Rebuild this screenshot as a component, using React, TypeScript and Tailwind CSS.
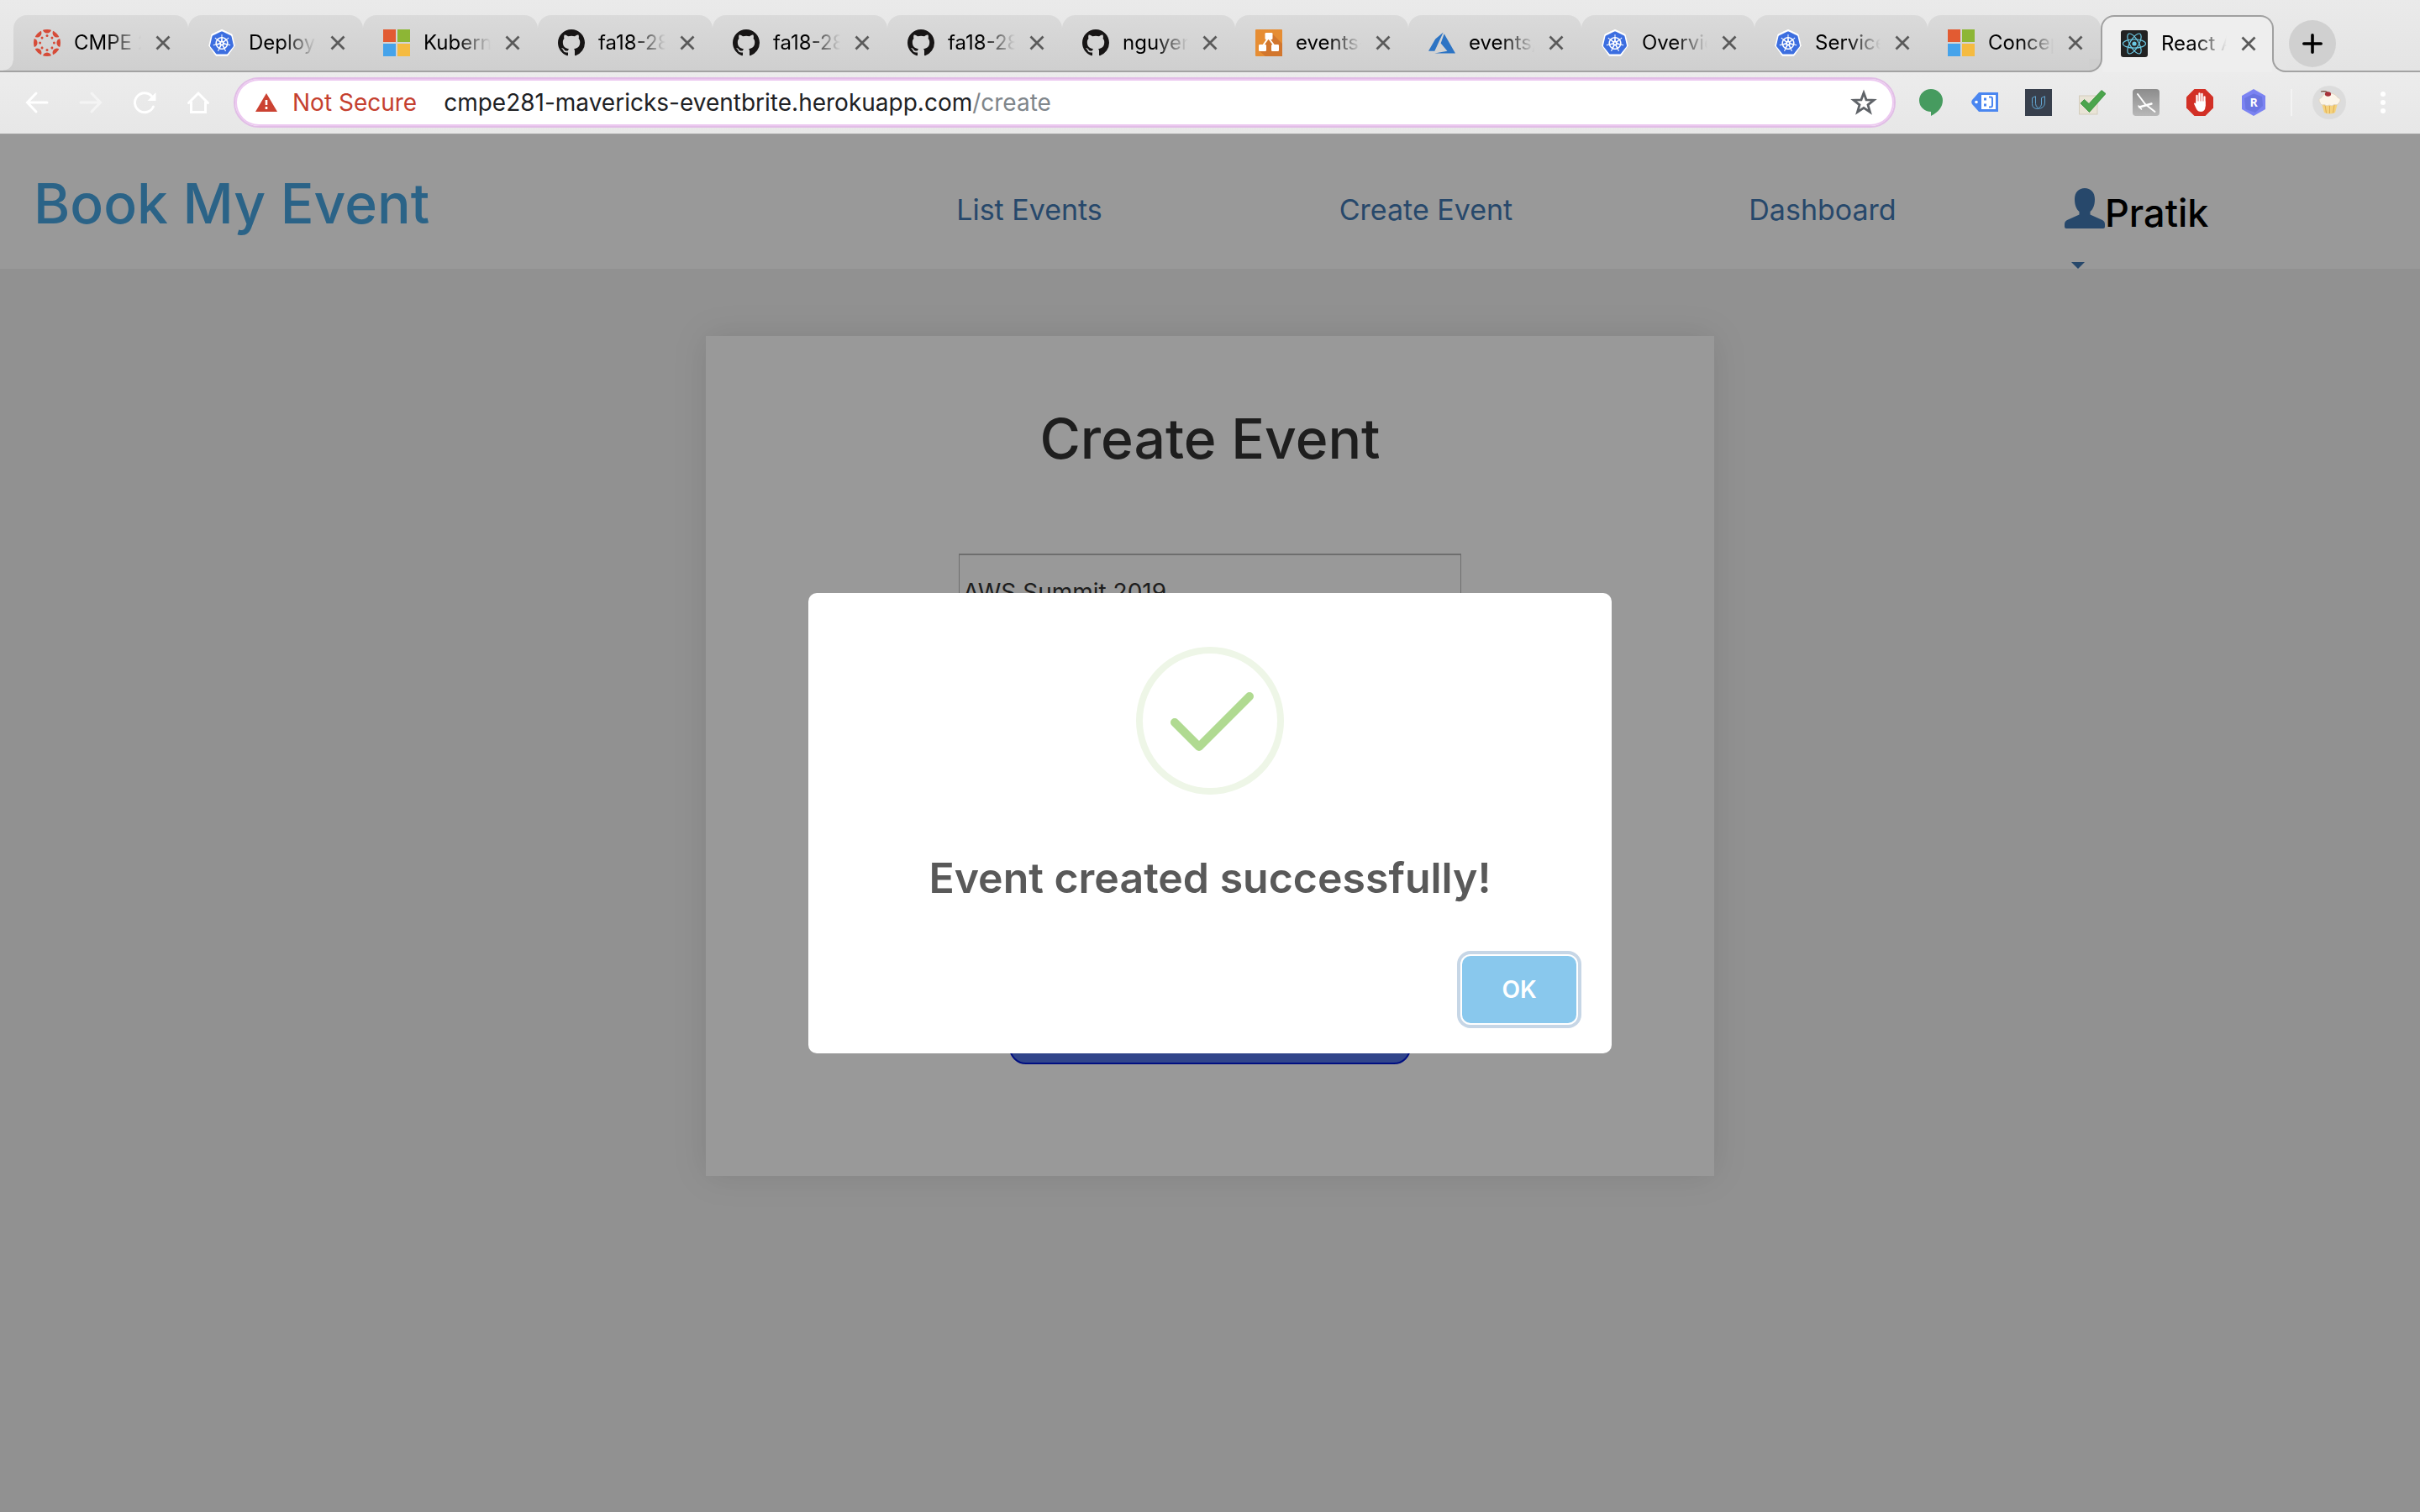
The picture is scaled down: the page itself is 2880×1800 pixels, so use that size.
import type { ReactNode } from "react";
import { SiKubernetes } from "react-icons/si";

function CanvasIcon() {
  const angles = [0, 45, 90, 135, 180, 225, 270, 315];
  return (
    <svg viewBox="0 0 32 32" className="size-8 shrink-0" fill="#d64b38">
      <clipPath id="canvas-disc">
        <circle cx="16" cy="16" r="16" />
      </clipPath>
      <g clipPath="url(#canvas-disc)">
        {angles.map((a) => (
          <g key={a} transform={`rotate(${a} 16 16)`}>
            <circle cx="16" cy="-0.6" r="5.2" />
            <circle cx="16" cy="7.6" r="1.5" />
          </g>
        ))}
      </g>
    </svg>
  );
}

function KubernetesIcon() {
  return (
    <span className="relative grid size-8 shrink-0 place-items-center">
      <svg viewBox="0 0 32 32" className="absolute inset-0 size-8" fill="#ffffff">
        <path d="M16 0.3 28 6 31.2 19.4 23 31.2H9L0.8 19.4 4 6Z" stroke="#ffffff" strokeWidth="1" strokeLinejoin="round" />
      </svg>
      <SiKubernetes className="relative size-7 text-[#3c6ee0]" />
    </span>
  );
}

function MicrosoftIcon() {
  return (
    <svg viewBox="0 0 32 32" className="size-8 shrink-0">
      <path fill="#e25b32" d="M0 0h15v15H0z" />
      <path fill="#8db635" d="M17 0h15v15H17z" />
      <path fill="#46a3ea" d="M0 17h15v15H0z" />
      <path fill="#f5bb41" d="M17 17h15v15H17z" />
    </svg>
  );
}

function GithubIcon() {
  return (
    <svg viewBox="0 0 16 16" className="size-8 shrink-0" fill="#171515">
      <path d="M8 0C3.58 0 0 3.58 0 8c0 3.54 2.29 6.53 5.47 7.59.4.07.55-.17.55-.38 0-.19-.01-.82-.01-1.49-2.01.37-2.53-.49-2.69-.94-.09-.23-.48-.94-.82-1.13-.28-.15-.68-.52-.01-.53.63-.01 1.08.58 1.23.82.72 1.21 1.87.87 2.33.66.07-.52.28-.87.51-1.07-1.78-.2-3.64-.89-3.64-3.95 0-.87.31-1.59.82-2.15-.08-.2-.36-1.02.08-2.12 0 0 .67-.21 2.2.82.64-.18 1.32-.27 2-.27s1.36.09 2 .27c1.53-1.04 2.2-.82 2.2-.82.44 1.1.16 1.92.08 2.12.51.56.82 1.27.82 2.15 0 3.07-1.87 3.75-3.65 3.95.29.25.54.73.54 1.48 0 1.07-.01 1.93-.01 2.2 0 .21.15.46.55.38A8.01 8.01 0 0 0 16 8c0-4.42-3.58-8-8-8" />
    </svg>
  );
}

function DrawIoIcon() {
  return (
    <svg viewBox="0 0 32 32" className="size-8 shrink-0">
      <rect width="32" height="32" rx="1" fill="#e68d33" />
      <path d="M20 5 32 17V32H12L5 26 16 12Z" fill="#d2762d" />
      <path d="M15.5 10 8.5 20M15.5 10 23 20" stroke="#fff" strokeWidth="2" />
      <rect x="11.500" y="4" width="9" height="8" rx="1.2" fill="#fff" />
      <rect x="4" y="18" width="9" height="8" rx="1.2" fill="#fff" />
      <rect x="19" y="18" width="9" height="8" rx="1.2" fill="#fff" />
    </svg>
  );
}

function AzureIcon() {
  return (
    <svg viewBox="0 0 24 24" className="size-8 shrink-0" fill="#2d74c4">
      <path d="M5.483 21.3H24L14.025 4.013l-3.038 8.347 5.836 6.938L5.483 21.3zM13.23 2.7L6.105 8.677 0 19.253h5.505v.014L13.23 2.7z" />
    </svg>
  );
}

function ReactIcon() {
  return (
    <svg viewBox="0 0 32 32" className="size-8 shrink-0">
      <rect width="32" height="32" rx="3" fill="#222222" />
      <g fill="none" stroke="#6cc9e4" strokeWidth="1.200">
        <ellipse cx="16" cy="16" rx="13.500" ry="5.200" />
        <ellipse cx="16" cy="16" rx="13.500" ry="5.200" transform="rotate(60 16 16)" />
        <ellipse cx="16" cy="16" rx="13.500" ry="5.200" transform="rotate(120 16 16)" />
      </g>
      <circle cx="16" cy="16" r="2.600" fill="#6cc9e4" />
    </svg>
  );
}

type TabInfo = { title: string; label: string; icon: ReactNode; wide?: boolean; active?: boolean };

const tabs: TabInfo[] = [
  { title: "CMPE 281", label: "CMPE", icon: <CanvasIcon />, wide: true },
  { title: "Deployments", label: "Deployments", icon: <KubernetesIcon />, wide: true },
  { title: "Kubernetes", label: "Kubernetes", icon: <MicrosoftIcon />, wide: true },
  { title: "fa18-281", label: "fa18-281", icon: <GithubIcon />, wide: true },
  { title: "fa18-281", label: "fa18-281", icon: <GithubIcon />, wide: true },
  { title: "fa18-281", label: "fa18-281", icon: <GithubIcon />, wide: true },
  { title: "nguyen", label: "nguyen", icon: <GithubIcon /> },
  { title: "events-", label: "events", icon: <DrawIoIcon /> },
  { title: "events/", label: "events", icon: <AzureIcon /> },
  { title: "Overview", label: "Overview", icon: <KubernetesIcon /> },
  { title: "Services", label: "Services", icon: <KubernetesIcon /> },
  { title: "Concepts", label: "Concepts", icon: <MicrosoftIcon /> },
  { title: "React App", label: "React App", icon: <ReactIcon />, active: true },
];

function Tab({ tab, first, divider }: { tab: TabInfo; first: boolean; divider: boolean }) {
  const width = tab.wide ? "w-[208px]" : "w-[206px]";
  const look = tab.active
    ? "-mb-0.5 z-10 rounded-t-2xl border-2 border-b-0 border-[#a0a0a0] bg-[#eeeeee] pb-0.5 pr-[18px] pl-[22px]"
    : "rounded-t-2xl bg-linear-to-b from-[#dadada] to-[#cfcfcf] pr-5 pl-6";
  return (
    <div className={`relative flex shrink-0 items-center ${width} ${look}`}>
      {first && (
        <span className="absolute bottom-0 -left-3 size-3 bg-[radial-gradient(circle_at_top_left,transparent_11px,#cfcfcf_12px)]" />
      )}
      {tab.active && (
        <>
          <span className="absolute bottom-0 -left-4 size-4 bg-[#ececec]">
            <span className="block size-4 rounded-br-2xl border-r-2 border-b-2 border-[#a0a0a0] bg-[#cfcfcf]" />
          </span>
          <span className="absolute -right-4 bottom-0 size-4 bg-[#ececec]">
            <span className="block size-4 rounded-bl-2xl border-b-2 border-l-2 border-[#a0a0a0] bg-[#e5e5e5]" />
          </span>
        </>
      )}
      <button type="button" className="flex min-w-0 flex-1 items-center gap-4">
        {tab.icon}
        <span className="flex-1 overflow-hidden text-left text-2xl leading-8 whitespace-nowrap text-black mask-r-from-50% mask-r-to-100%">
          {tab.title}
        </span>
      </button>
      <button type="button" aria-label={`Close ${tab.label}`} className="ml-4 grid size-5 shrink-0 place-items-center">
        <svg viewBox="0 0 20 20" className="size-5" stroke="#5a5a5a" strokeWidth="2.800">
          <path d="M2.500 2.500 17.500 17.500M17.500 2.500 2.500 17.500" />
        </svg>
      </button>
      {divider && <span className="absolute top-[15px] right-0 h-10 w-0.5 translate-x-full bg-[#9a9a9a]" />}
    </div>
  );
}

function TabStrip() {
  return (
    <div className="flex h-[86px] border-b-2 border-[#a3a3a3] bg-linear-to-b from-[#eaeaea] to-[#e4e4e4] pt-[18px] pl-4">
      {tabs.map((tab, i) => (
        <Tab key={i} tab={tab} first={i === 0} divider={i < tabs.length - 2} />
      ))}
      <button
        type="button"
        aria-label="New tab"
        className="mt-1.5 ml-[18px] grid size-14 shrink-0 place-items-center rounded-full bg-[#d0d0d0]"
      >
        <svg viewBox="0 0 24 24" className="size-6" stroke="#000" strokeWidth="3.600" strokeLinecap="round">
          <path d="M12 1.800V22.200M1.800 12H22.200" />
        </svg>
      </button>
    </div>
  );
}

function NavButton({ label, children, faded }: { label: string; children: ReactNode; faded?: boolean }) {
  return (
    <button type="button" aria-label={label} className="grid h-16 w-16 shrink-0 place-items-center">
      <svg
        viewBox="0 0 32 32"
        className={faded ? "size-8 opacity-50" : "size-8"}
        fill="none"
        stroke="#ffffff"
        strokeWidth="3"
        strokeLinecap="round"
      >
        {children}
      </svg>
    </button>
  );
}

function Extension({ label, children }: { label: string; children: ReactNode }) {
  return (
    <button type="button" aria-label={label} className="grid h-16 w-16 shrink-0 place-items-center">
      {children}
    </button>
  );
}

function Toolbar() {
  return (
    <div className="flex h-[74px] items-center border-b border-[#a0a0a0] bg-linear-to-b from-[#ececec] to-[#e7e7e7] pb-0.5 pl-3">
      <NavButton label="Back">
        <path d="M28 16H5M15 5 4.500 16 15 27" />
      </NavButton>
      <NavButton label="Forward" faded>
        <path d="M4 16H27M17 5 27.500 16 17 27" />
      </NavButton>
      <NavButton label="Reload">
        <path d="M26.500 21A11.500 11.500 0 1 1 24.500 8.500" />
        <path d="M29.500 4v10H19.500Z" fill="#fff" stroke="none" />
      </NavButton>
      <NavButton label="Home">
        <path d="M4.500 16.500 16 5 27.500 16.500M7.500 15.500V27.500H24.500V15.500" />
      </NavButton>
      <div className="ml-2.5 flex h-[60px] flex-1 items-center rounded-full border-2 border-[#e1bde6] bg-white pr-5 pl-6 ring-2 ring-[#ecc8f0] ring-inset">
        <svg viewBox="0 0 26 22" className="h-[22px] w-[26px] shrink-0">
          <path d="M13 0 26 22H0Z" fill="#cb4232" />
          <path d="M13 8v6M13 16v3" stroke="#fff" strokeWidth="2.600" />
        </svg>
        <span className="ml-[18px] text-[28px] leading-10 whitespace-nowrap text-[#c5402f]">Not Secure</span>
        <a href="#create" className="ml-8 flex-1 text-[28px] leading-10 whitespace-nowrap text-[#202124]">
          cmpe281-mavericks-eventbrite.herokuapp.com<span className="text-[#80868b]">/create</span>
        </a>
        <button type="button" aria-label="Bookmark this page" className="grid size-8 place-items-center">
          <svg viewBox="0 0 32 32" className="size-8" fill="none" stroke="#5f6368" strokeWidth="2.800">
            <path d="M16 4.500 19 12.800 28 13.200 21 18.800 23.500 27.500 16 22.400 8.500 27.500 11 18.800 4 13.200 13 12.800Z" />
          </svg>
        </button>
      </div>
      <div className="ml-2.5 flex items-center">
        <Extension label="Hangouts">
          <svg viewBox="0 0 32 32" className="size-8" fill="#469b5f">
            <path d="M16 0a14 13.500 0 0 1 14 13.500C30 21 25 27.500 16 32V27A14 13.500 0 0 1 16 0Z" />
          </svg>
        </Extension>
        <Extension label="Coupons">
          <svg viewBox="0 0 32 32" className="size-8">
            <path d="M9 4H32V27H9L1 18Q-.5 15.500 1 13Z" fill="#4a86f0" />
            <circle cx="6" cy="15.500" r="1.800" fill="#fff" />
            <rect x="12" y="7" width="17" height="17" fill="#fff" />
            <path d="M15 10.500h3v3h-3zM15 17.500h3v3h-3z" fill="#4a86f0" />
            <path d="M21 9.500h2q2 0 2 2v8q0 2-2 2h-2" stroke="#4a86f0" strokeWidth="2" fill="none" />
          </svg>
        </Extension>
        <Extension label="Udacity">
          <svg viewBox="0 0 32 32" className="size-8">
            <rect width="32" height="32" fill="#38404d" />
            <path
              d="M8.500 10.500 12.500 8.700V17.500Q12.500 21.500 16 22.300M8.500 10.500V17.500Q8.500 23.500 15 23.500 23.500 23 23.500 16V8.700L19.500 10.500V18Q19.500 20.500 17 22"
              fill="none"
              stroke="#62a6d2"
              strokeWidth="1"
            />
          </svg>
        </Extension>
        <Extension label="Checker">
          <svg viewBox="0 0 32 32" className="size-8">
            <rect x="0.500" y="8" width="21.500" height="22" fill="#e9e4d6" stroke="#d3cdbd" />
            <path d="M2 17 6.500 12.500 12 17.500 27 1.500 32 5.500 12.500 27.500Z" fill="#4ba54c" stroke="#2f8a35" strokeWidth="0.800" />
          </svg>
        </Extension>
        <Extension label="Glider">
          <svg viewBox="0 0 32 32" className="size-8">
            <defs>
              <linearGradient id="glider" x1="0" y1="0" x2="0" y2="1">
                <stop offset="0" stopColor="#8c8c8c" />
                <stop offset="1" stopColor="#b8b8b8" />
              </linearGradient>
            </defs>
            <rect width="32" height="32" rx="4" fill="url(#glider)" />
            <g stroke="#fff" strokeLinecap="round" fill="none">
              <path d="M6 6 15 18M15 18 26.500 27" strokeWidth="2" />
              <path d="M8 21.500 22.500 17.500" strokeWidth="2.400" />
              <path d="M7 20 10.500 24" strokeWidth="1.600" />
            </g>
          </svg>
        </Extension>
        <Extension label="Ad blocker">
          <svg viewBox="0 0 32 32" className="size-8">
            <path d="M9.500 0h13L32 9.500v13L22.500 32h-13L0 22.500v-13Z" fill="#d23026" />
            <path d="M12.500 8V17M15.500 5.500V16M18.500 6V16M21.500 9.500V20" stroke="#fff" strokeWidth="2.300" strokeLinecap="round" />
            <path d="M11.400 14.500H22.600V20Q22.600 27 17.500 27 13.500 27 11.800 23.500L9 17.500Q9.500 15.500 11.400 17.500Z" fill="#fff" />
          </svg>
        </Extension>
        <Extension label="R extension">
          <svg viewBox="0 0 32 32" className="size-8">
            <path d="M16 0 30 8V24L16 32 2 24V8Z" fill="#7b83f2" />
            <path d="M16 5.500 26 9 27 20 18 28 6.500 24 5 11Z" fill="#6a75e2" />
            <text x="16" y="21" textAnchor="middle" fontFamily="Open Sans, sans-serif" fontWeight="700" fontSize="14" fill="#fff">
              R
            </text>
          </svg>
        </Extension>
      </div>
      <span className="ml-3 h-8 w-0.5 bg-[#f3f3f3]" />
      <button type="button" aria-label="Profile" className="ml-6 grid size-10 place-items-center rounded-full bg-[#dcdcdc]">
        <svg viewBox="0 0 32 32" className="size-8">
          <path d="M7 17H26L23 28Q16 31 10 28Z" fill="#f5d27c" />
          <path d="M11 19 12.500 28.500M16.500 20V29M22 19 20.500 28.500" stroke="#dfae55" strokeWidth="1" />
          <path d="M5 16Q2 12 7 10 9 5 16 5T26 10Q31 12 28 16 26 20 22 18.500 19 21 16 19 13 21 10 18.500 6 20 5 16Z" fill="#fbf5ea" stroke="#dfd2bb" strokeWidth="0.800" />
          <path d="M14 4Q11 2 6 3" stroke="#6d4634" strokeWidth="1.200" fill="none" />
          <ellipse cx="14.500" cy="6" rx="3.600" ry="2.700" fill="#a8323a" />
        </svg>
      </button>
      <button type="button" aria-label="Menu" className="mr-7 ml-7 grid size-8 place-items-center">
        <svg viewBox="0 0 32 32" className="size-8" fill="#ffffff">
          <circle cx="16" cy="6" r="3" />
          <circle cx="16" cy="16" r="3" />
          <circle cx="16" cy="26" r="3" />
        </svg>
      </button>
    </div>
  );
}

function SiteHeader() {
  const link = "pt-5 text-center text-[34px] leading-10 text-[#4279b3]";
  return (
    <header className="grid h-40 grid-cols-[989fr_472fr_472fr_472fr_475fr] items-center bg-white">
      <a href="#home" className="pt-1 pl-10 text-[66px] leading-20 font-medium whitespace-nowrap text-[#48a6e2]">
        Book My Event
      </a>
      <a href="#list" className={link}>
        List Events
      </a>
      <a href="#create" className={link}>
        Create Event
      </a>
      <a href="#dashboard" className={link}>
        Dashboard
      </a>
      <button type="button" aria-label="Pratik account menu" className="flex h-40 flex-col items-start justify-between pt-16 pl-[52px]">
        <span className="flex items-start">
          <svg viewBox="0 0 48 48" className="size-12" fill="#4279b3">
            <path d="M24 0C31 0 36 5 36 13C36 20 34 25 30.500 28V31.500L45 38Q48 39.500 48 43V46Q48 48 46 48H2Q0 48 0 46V43Q0 39.500 3 38L17.500 31.500V28C14 25 12 20 12 13C12 5 17 0 24 0Z" />
          </svg>
          <span className="pt-1.5 text-[45px] leading-12 font-medium text-black">Pratik</span>
        </span>
        <svg viewBox="0 0 16 8" className="ml-2 h-2 w-4" fill="#4279b3">
          <path d="M0 0h16L8 8Z" />
        </svg>
      </button>
    </header>
  );
}

function EventForm() {
  const field = "h-[90px] w-full border border-t-2 border-[#b8b8b8] bg-white px-1 text-[28px] text-[#333]";
  return (
    <section className="mx-auto mt-20 h-[1000px] w-[1200px] bg-white pt-[82px] shadow-[0_0_40px_rgba(0,0,0,0.1)]">
      <h1 className="text-center text-[66px] leading-20 font-medium text-[#333]">Create Event</h1>
      <form className="mx-auto mt-[97px] flex w-[598px] flex-col items-center gap-[33px]">
        <input aria-label="Event name" defaultValue="AWS Summit 2019" className={field} />
        <input aria-label="Location" className={field} />
        <input aria-label="Date" className={field} />
        <input aria-label="Price" className={field} />
        <button
          type="submit"
          aria-label="Create"
          className="mt-9 h-20 w-[478px] rounded-[20px] border-2 border-[#001ad8] bg-[#5273e6]"
        />
      </form>
    </section>
  );
}

function SuccessDialog() {
  return (
    <div className="absolute inset-0 grid place-items-center bg-black/40">
      <div
        role="dialog"
        aria-modal="true"
        aria-labelledby="dialog-title"
        className="flex w-[956px] flex-col items-center rounded-[10px] bg-white pt-16 pb-9"
      >
        <svg viewBox="0 0 176 176" className="size-44" fill="none">
          <circle cx="88" cy="88" r="84" stroke="#eef6e7" strokeWidth="8" />
          <path d="M46 90 75 119 135 59" stroke="#b0da91" strokeWidth="10" strokeLinecap="round" strokeLinejoin="round" />
        </svg>
        <h2 id="dialog-title" className="mt-16 text-[50px] leading-[70px] font-semibold text-[#595959]">
          Event created successfully!
        </h2>
        <button
          type="button"
          className="mt-[58px] mr-[42px] h-20 w-[136px] self-end rounded-[10px] bg-[#89c8ed] text-[28px] font-semibold text-white shadow-[0_0_0_2px_#fff,0_0_0_6px_#c6d6e6]"
        >
          OK
        </button>
      </div>
    </div>
  );
}

export default function App() {
  return (
    <div className="flex min-h-screen flex-col overflow-hidden font-['Inter','Liberation_Sans',sans-serif]">
      <TabStrip />
      <Toolbar />
      <main className="relative flex-1 bg-[#f2f2f2]">
        <SiteHeader />
        <EventForm />
        <SuccessDialog />
      </main>
    </div>
  );
}
